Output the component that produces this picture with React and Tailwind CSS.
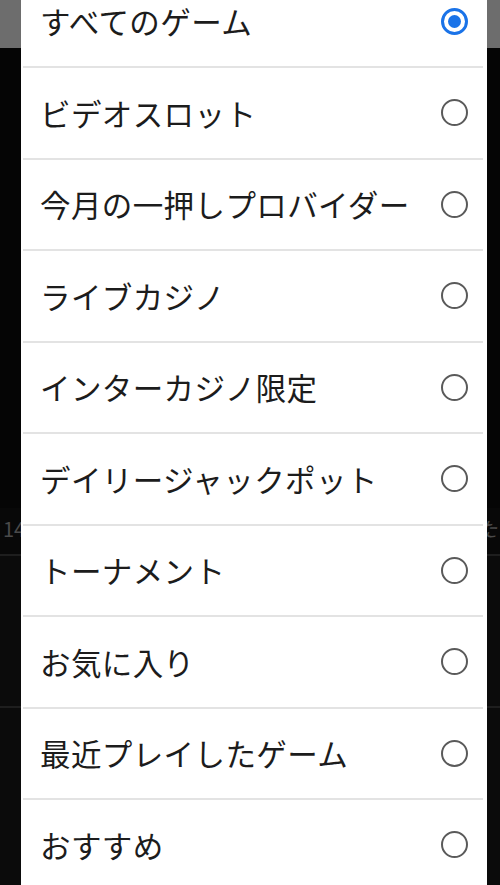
import { useState } from 'react';

const categories = [
  'すべてのゲーム',
  'ビデオスロット',
  '今月の一押しプロバイダー',
  'ライブカジノ',
  'インターカジノ限定',
  'デイリージャックポット',
  'トーナメント',
  'お気に入り',
  '最近プレイしたゲーム',
  'おすすめ',
];

const Radio = ({ checked }) =>
  checked ? (
    <span className="flex h-[27px] w-[27px] items-center justify-center rounded-full border-[3px] border-[#1a73e8]">
      <span className="h-[13px] w-[13px] rounded-full bg-[#1a73e8]" />
    </span>
  ) : (
    <span className="block h-[27px] w-[27px] rounded-full border-[2.5px] border-[#5a5a5a]" />
  );

const App = () => {
  const [selected, setSelected] = useState(0);

  return (
    <div
      className="relative h-[885px] w-[500px] overflow-hidden bg-[#050505]"
      style={{ fontFamily: '"Noto Sans CJK JP", "Noto Sans", sans-serif' }}
    >
      {/* page behind the sheet, dimmed */}
      <div className="flex h-full flex-col">
        <div className="h-[48px] bg-[#6d6d6d]" />
        <div className="h-[460px] bg-[#050505]" />
        <div className="flex h-[46px] items-start justify-between bg-[#080808] px-[3px] pt-[6px] text-[20px] text-[#4a4a4a]">
          <span>14</span>
          <span className="italic">た</span>
        </div>
        <div className="h-[2px] bg-[#1e1e1e]" />
        <div className="h-[150px] bg-[#0b0b0b]" />
        <div className="h-[2px] bg-[#1e1e1e]" />
        <div className="flex-1 bg-[#0b0b0b]" />
      </div>

      {/* choice sheet */}
      <div className="absolute left-[21px] top-[-23.5px] w-[466px] bg-white">
        {categories.map((label, i) => (
          <button
            key={label}
            onClick={() => setSelected(i)}
            className="flex h-[91.5px] w-full flex-col text-left"
          >
            <div className="flex flex-1 items-center justify-between pl-[19px] pr-[19px]">
              <span className="text-[30.5px] font-normal leading-none tracking-[0.4px] text-[#1c1c1c]">{label}</span>
              <Radio checked={selected === i} />
            </div>
            <div className="mx-[2px] h-[2px] w-[460px] bg-[#e3e3e3]" />
          </button>
        ))}
      </div>
    </div>
  );
};

export default App;
